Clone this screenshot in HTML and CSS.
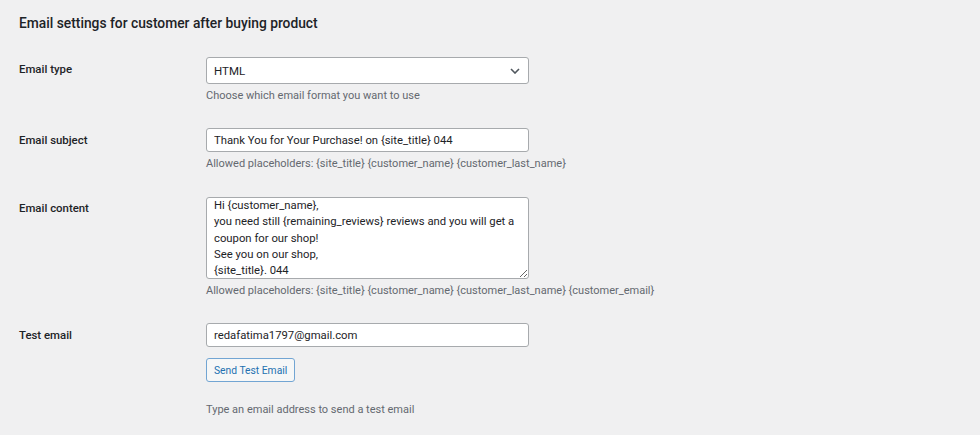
FILE: index.html
```html
<!DOCTYPE html>
<html lang="en">
<head>
<meta charset="utf-8">
<title>Email settings</title>
<link rel="stylesheet" href="styles.css">
</head>
<body>
<div class="wrap">
  <h2 class="title">Email settings for customer after buying product</h2>
  <div class="form-table">
    <div class="row">
      <div class="th"><label for="etype">Email type</label></div>
      <div class="td">
        <div class="select">
          <span class="select-value">HTML</span>
          <svg class="chev" width="10" height="6" viewBox="0 0 10 6"><path d="M1 1l4 4 4-4" fill="none" stroke="#50575e" stroke-width="1.6"/></svg>
        </div>
        <p class="description">Choose which email format you want to use</p>
      </div>
    </div>
    <div class="row">
      <div class="th"><label for="esubj">Email subject</label></div>
      <div class="td">
        <input id="esubj" class="text" type="text" value="Thank You for Your Purchase! on {site_title} 044">
        <p class="description">Allowed placeholders: {site_title} {customer_name} {customer_last_name}</p>
      </div>
    </div>
    <div class="row">
      <div class="th"><label for="econt">Email content</label></div>
      <div class="td">
        <textarea id="econt" class="area">Hi {customer_name},
you need still {remaining_reviews} reviews and you will get a
coupon for our shop!
See you on our shop,
{site_title}. 044</textarea>
        <p class="description desc-area">Allowed placeholders: {site_title} {customer_name} {customer_last_name} {customer_email}</p>
      </div>
    </div>
    <div class="row">
      <div class="th"><label for="etest">Test email</label></div>
      <div class="td">
        <input id="etest" class="text" type="text" value="redafatima1797@gmail.com">
        <button class="button" type="button">Send Test Email</button>
        <p class="description desc-test">Type an email address to send a test email</p>
      </div>
    </div>
  </div>
</div>
</body>
</html>
```
FILE: styles.css
```css
html, body {
  margin: 0;
  padding: 0;
  background: #f0f0f1;
}
body {
  font-family: Roboto, "Open Sans", sans-serif;
  color: #1d2327;
  font-size: 12px;
}
.wrap {
  padding: 0 19px;
}
.title {
  margin: 13px 0 0;
  font-size: 13.8px;
  line-height: 20px;
  font-weight: 500;
  color: #1d2327;
}
.form-table {
  margin-top: 12px;
}
.row {
  display: flex;
  padding: 12px 0;
}
.th {
  width: 187px;
  flex: none;
  padding-top: 4px;
  font-weight: 500;
  font-size: 11.4px;
  line-height: 16px;
}
.td {
  display: flex;
  flex-direction: column;
  align-items: flex-start;
}
.select {
  box-sizing: border-box;
  width: 323px;
  height: 27px;
  background: #fff;
  border: 1px solid #a7aaad;
  border-radius: 3px;
  display: flex;
  align-items: center;
  justify-content: space-between;
  padding: 0 8px 0 7px;
  font-size: 11.5px;
}
.chev {
  display: block;
}
.description {
  margin: 4px 0 0;
  font-size: 11px;
  line-height: 16px;
  color: #646970;
}
.text {
  box-sizing: border-box;
  width: 323px;
  height: 24px;
  margin: 0;
  padding: 0 7px;
  background: #fff;
  border: 1px solid #a7aaad;
  border-radius: 3px;
  font-family: inherit;
  font-size: 11.3px;
  color: #1d2327;
}
.area {
  box-sizing: border-box;
  width: 323px;
  height: 82px;
  margin: 1px 0 0;
  padding: 0 4px 0 7px;
  background: #fff;
  border: 1px solid #a7aaad;
  border-radius: 3px;
  font-family: inherit;
  font-size: 11.3px;
  line-height: 16.3px;
  color: #1d2327;
  white-space: pre;
  overflow: hidden;
  resize: vertical;
}
.desc-area {
  margin-top: 4px;
}
.button {
  margin-top: 11px;
  box-sizing: border-box;
  height: 24px;
  padding: 0 7px;
  background: #f6f7f7;
  border: 1px solid #72a5d3;
  border-radius: 3px;
  color: #2271b1;
  font-family: inherit;
  font-size: 10.3px;
}
.desc-test {
  margin-top: 20px;
}
```
